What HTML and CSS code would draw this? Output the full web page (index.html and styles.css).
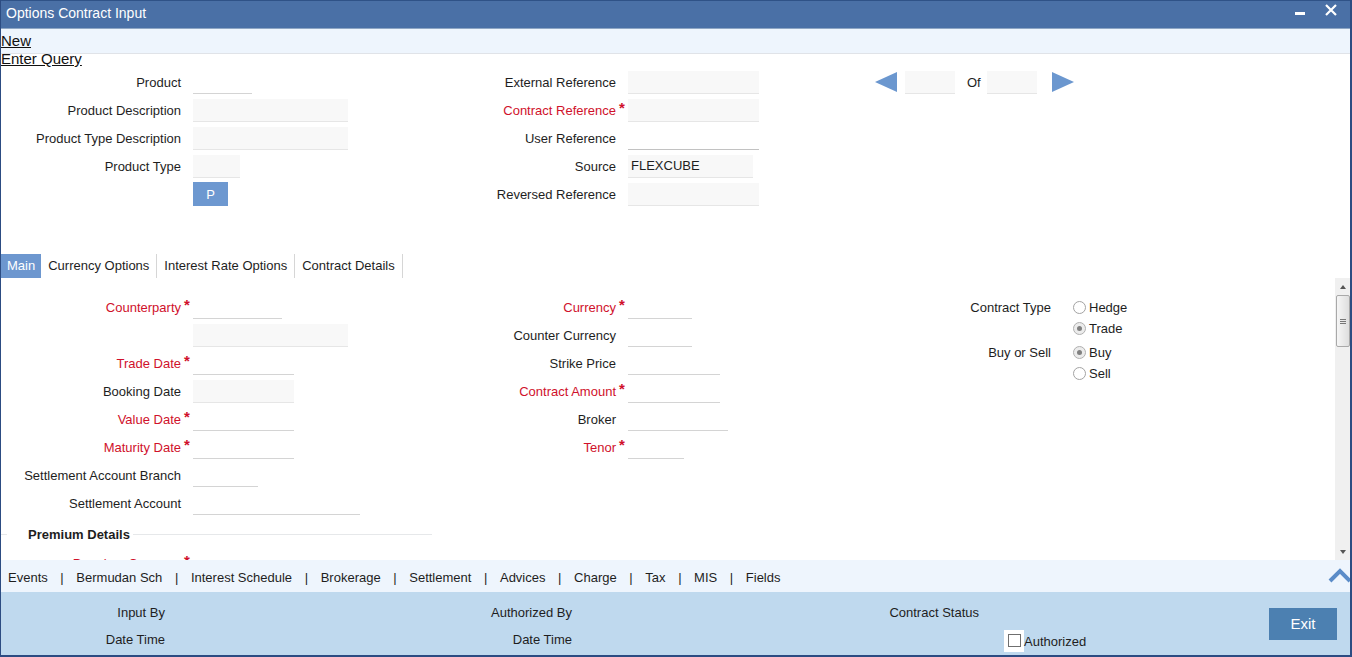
FILE: index.html
```html
<!DOCTYPE html>
<html>
<head>
<meta charset="utf-8">
<title>Options Contract Input</title>
<link rel="stylesheet" href="styles.css">
</head>
<body>
<div class="window">
  <div class="titlebar">
    <span class="title">Options Contract Input</span>
    <svg class="win-min" width="10" height="12" viewBox="0 0 10 12"><rect x="0" y="8" width="10" height="3" fill="#fff"/></svg>
    <svg class="win-close" width="12" height="12" viewBox="0 0 12 12"><path d="M1 1 L11 11 M11 1 L1 11" stroke="#fff" stroke-width="2.2" fill="none"/></svg>
  </div>
  <div class="menubar"><a class="menu-link">New</a></div>
  <div class="menurow2"><a class="menu-link">Enter Query</a></div>

  <div class="header">
    <div class="col col-left">
      <div class="frow"><span class="lbl">Product</span><span class="star"></span><input class="fld ed w59" type="text"></div>
      <div class="frow"><span class="lbl">Product Description</span><span class="star"></span><input class="fld ro w155" type="text" readonly></div>
      <div class="frow"><span class="lbl">Product Type Description</span><span class="star"></span><input class="fld ro w155" type="text" readonly></div>
      <div class="frow"><span class="lbl">Product Type</span><span class="star"></span><input class="fld ro w47" type="text" readonly></div>
      <div class="frow"><span class="lbl"></span><span class="star"></span><button class="pbtn">P</button></div>
    </div>
    <div class="col col-mid hdr-mid">
      <div class="frow"><span class="lbl">External Reference</span><span class="star"></span><input class="fld ro w131" type="text" readonly></div>
      <div class="frow"><span class="lbl req">Contract Reference</span><span class="star">*</span><input class="fld ro w131" type="text" readonly></div>
      <div class="frow"><span class="lbl">User Reference</span><span class="star"></span><input class="fld ed dark w131" type="text"></div>
      <div class="frow"><span class="lbl">Source</span><span class="star"></span><input class="fld ro w125" type="text" value="FLEXCUBE" readonly></div>
      <div class="frow"><span class="lbl">Reversed Reference</span><span class="star"></span><input class="fld ro w131" type="text" readonly></div>
    </div>
    <div class="nav">
      <svg width="22" height="20" viewBox="0 0 22 20"><polygon points="0,10 22,0 22,20" fill="#6b97cf"/></svg>
      <input class="fld ro navbox" type="text" readonly>
      <span class="of">Of</span>
      <input class="fld ro navbox" type="text" readonly>
      <svg class="nav-next" width="22" height="20" viewBox="0 0 22 20"><polygon points="0,0 22,10 0,20" fill="#6b97cf"/></svg>
    </div>
  </div>

  <div class="tabs">
    <span class="tab tab-active">Main</span>
    <span class="tab">Currency Options</span>
    <span class="tab">Interest Rate Options</span>
    <span class="tab">Contract Details</span>
  </div>

  <div class="content">
    <div class="content-inner">
      <div class="main-cols">
        <div class="col col-left">
          <div class="frow"><span class="lbl req">Counterparty</span><span class="star">*</span><input class="fld ed w89" type="text"></div>
          <div class="frow"><span class="lbl"></span><span class="star"></span><input class="fld ro w155" type="text" readonly></div>
          <div class="frow"><span class="lbl req">Trade Date</span><span class="star">*</span><input class="fld ed w101" type="text"></div>
          <div class="frow"><span class="lbl">Booking Date</span><span class="star"></span><input class="fld ro w101" type="text" readonly></div>
          <div class="frow"><span class="lbl req">Value Date</span><span class="star">*</span><input class="fld ed w101" type="text"></div>
          <div class="frow"><span class="lbl req">Maturity Date</span><span class="star">*</span><input class="fld ed w101" type="text"></div>
          <div class="frow"><span class="lbl">Settlement Account Branch</span><span class="star"></span><input class="fld ed w65" type="text"></div>
          <div class="frow"><span class="lbl">Settlement Account</span><span class="star"></span><input class="fld ed w167" type="text"></div>
        </div>
        <div class="col col-mid">
          <div class="frow"><span class="lbl req">Currency</span><span class="star">*</span><input class="fld ed w64" type="text"></div>
          <div class="frow"><span class="lbl">Counter Currency</span><span class="star"></span><input class="fld ed w64" type="text"></div>
          <div class="frow"><span class="lbl">Strike Price</span><span class="star"></span><input class="fld ed w92" type="text"></div>
          <div class="frow"><span class="lbl req">Contract Amount</span><span class="star">*</span><input class="fld ed w92" type="text"></div>
          <div class="frow"><span class="lbl">Broker</span><span class="star"></span><input class="fld ed w100" type="text"></div>
          <div class="frow"><span class="lbl req">Tenor</span><span class="star">*</span><input class="fld ed w56" type="text"></div>
        </div>
        <div class="col col-right">
          <div class="rgroup">
            <span class="rlbl">Contract Type</span>
            <div class="ropts">
              <div class="ropt"><span class="radio"></span>Hedge</div>
              <div class="ropt"><span class="radio checked"></span>Trade</div>
            </div>
          </div>
          <div class="rgroup">
            <span class="rlbl">Buy or Sell</span>
            <div class="ropts">
              <div class="ropt"><span class="radio checked"></span>Buy</div>
              <div class="ropt"><span class="radio"></span>Sell</div>
            </div>
          </div>
        </div>
      </div>
      <div class="section-title"><span class="sec-text">Premium Details</span></div>
      <div class="col col-left">
        <div class="frow"><span class="lbl req">Premium Currency</span><span class="star">*</span><input class="fld ed w64" type="text"></div>
      </div>
    </div>
    <div class="scrollbar">
      <div class="sb-btn"><span class="tri-up"></span></div>
      <div class="sb-thumb"><span class="grip"></span><span class="grip"></span><span class="grip"></span></div>
      <div class="sb-track"></div>
      <div class="sb-btn"><span class="tri-down"></span></div>
    </div>
  </div>

  <div class="toolbar">
    <span class="tb-item">Events</span><span class="sep">|</span>
    <span class="tb-item">Bermudan Sch</span><span class="sep">|</span>
    <span class="tb-item">Interest Schedule</span><span class="sep">|</span>
    <span class="tb-item">Brokerage</span><span class="sep">|</span>
    <span class="tb-item">Settlement</span><span class="sep">|</span>
    <span class="tb-item">Advices</span><span class="sep">|</span>
    <span class="tb-item">Charge</span><span class="sep">|</span>
    <span class="tb-item">Tax</span><span class="sep">|</span>
    <span class="tb-item">MIS</span><span class="sep">|</span>
    <span class="tb-item">Fields</span>
    <svg class="chev" width="24" height="16" viewBox="0 0 24 16"><polyline points="2,14 12,4 22,14" fill="none" stroke="#5b8cc8" stroke-width="4"/></svg>
  </div>

  <div class="footer">
    <div class="fblock">
      <div class="fr"><span class="flbl">Input By</span></div>
      <div class="fr"><span class="flbl">Date Time</span></div>
    </div>
    <div class="fblock">
      <div class="fr"><span class="flbl">Authorized By</span></div>
      <div class="fr"><span class="flbl">Date Time</span></div>
    </div>
    <div class="fblock">
      <div class="fr"><span class="flbl">Contract Status</span></div>
      <div class="fr"><span class="flbl"></span><span class="cbwrap"><span class="cb"></span></span><span class="cbtext">Authorized</span></div>
    </div>
    <button class="exit">Exit</button>
  </div>
</div>
</body>
</html>
```

FILE: styles.css
```css
* { box-sizing: border-box; }
html, body { margin: 0; padding: 0; }
body {
  font-family: "Liberation Sans", Arial, sans-serif;
  font-size: 13px;
  color: #1e1e1e;
  background: #fff;
}
.window {
  width: 1352px;
  height: 657px;
  display: flex;
  flex-direction: column;
  border-left: 1px solid #2c4c82;
  border-right: 2px solid #2c4c82;
  border-bottom: 2px solid #2c4c82;
  overflow: hidden;
}
.titlebar {
  height: 29px;
  flex: none;
  display: flex;
  align-items: flex-start;
  background: #4a70a6;
  border-top: 1px solid #2f5287;
  border-bottom: 1px solid #8ea6c4;
  padding: 5px 13px 0 5px;
  color: #fff;
  font-size: 14px;
  line-height: 14px;
}
.title { flex: 1; }
.win-min { margin-top: -2px; margin-right: 20px; }
.win-close { margin-top: -2px; }

.menubar {
  height: 25px;
  flex: none;
  background: #eef5fd;
  border-bottom: 1px solid #e0e3e8;
  line-height: 23px;
}
.menurow2 {
  height: 14px;
  flex: none;
  line-height: 10px;
}
.menu-link {
  font-size: 15px;
  color: #111;
  text-decoration: underline;
}

.header {
  height: 140px;
  flex: none;
  margin-bottom: 46px;
  display: flex;
}
.col { display: flex; flex-direction: column; }
.col-left { width: 434px; }
.col-left .lbl { width: 180px; }
.col-mid { width: 435px; }
.col-mid .lbl { width: 181px; }
.hdr-mid { width: 440px; }
.frow {
  height: 28px;
  display: flex;
  align-items: center;
  flex: none;
}
.lbl { text-align: right; white-space: nowrap; flex: none; }
.req { color: #d0112b; }
.star {
  width: 12px;
  flex: none;
  align-self: flex-start;
  margin-top: 5px;
  padding-left: 3px;
  color: #d0112b;
  font-size: 15px;
  font-weight: bold;
  line-height: 14px;
}
.fld {
  height: 23px;
  border: none;
  border-bottom: 1px solid #e6e6e6;
  padding: 0 3px;
  margin: 0;
  font-family: "Liberation Sans", Arial, sans-serif;
  font-size: 13px;
  color: #1e1e1e;
  outline: none;
  flex: none;
}
.ro { background: #f8f8f8; }
.ed { background: #fff; border-bottom-color: #d4d4d4; }
.dark { border-bottom-color: #c2c2c2; }
.w47 { width: 47px; }
.w56 { width: 56px; }
.w59 { width: 59px; }
.w64 { width: 64px; }
.w65 { width: 65px; }
.w89 { width: 89px; }
.w92 { width: 92px; }
.w100 { width: 100px; }
.w101 { width: 101px; }
.w125 { width: 125px; }
.w131 { width: 131px; }
.w155 { width: 155px; }
.w167 { width: 167px; }
.pbtn {
  width: 35px;
  height: 24px;
  border: none;
  background: #6d98d0;
  color: #fff;
  font-family: "Liberation Sans", Arial, sans-serif;
  font-size: 13px;
  padding: 0;
}
.nav {
  height: 28px;
  display: flex;
  align-items: center;
}
.navbox { width: 50px; margin-left: 8px; }
.of { margin-left: 12px; margin-right: 6px; }
.nav .of + .navbox { margin-left: 0; }
.nav-next { margin-left: 15px; }

.tabs {
  height: 24px;
  flex: none;
  display: flex;
  line-height: 24px;
}
.tab {
  padding: 0 7px;
  border-right: 1px solid #d6d6d6;
  white-space: nowrap;
}
.tab-active {
  padding: 0 6px;
  background: #6d97cf;
  color: #fff;
  border-right: none;
}

.content {
  flex: 1;
  display: flex;
  min-height: 0;
  overflow: hidden;
}
.content-inner {
  flex: 1;
  overflow: hidden;
  padding-top: 15px;
}
.main-cols { display: flex; }
.col-right { padding-top: 4px; }
.rgroup { display: flex; margin-bottom: 3px; }
.rlbl {
  width: 181px;
  text-align: right;
  height: 21px;
  line-height: 21px;
  margin-right: 22px;
}
.ropts { display: flex; flex-direction: column; }
.ropt {
  height: 21px;
  display: flex;
  align-items: center;
  gap: 3px;
}
.radio {
  width: 13px;
  height: 13px;
  border-radius: 50%;
  border: 1px solid #a3a3a3;
  background: #fff;
  display: inline-flex;
  align-items: center;
  justify-content: center;
}
.radio.checked { background: #ececec; border-color: #b0b0b0; }
.radio.checked::after {
  content: "";
  width: 5px;
  height: 5px;
  border-radius: 50%;
  background: #808080;
}
.section-title {
  width: 432px;
  height: 30px;
  margin-top: 2px;
  margin-left: -1px;
  display: flex;
  align-items: center;
}
.section-title::before {
  content: "";
  width: 7px;
  height: 1px;
  background: #e6e8ea;
  margin-right: 21px;
}
.section-title::after {
  content: "";
  flex: 1;
  height: 1px;
  background: #e6e8ea;
  margin-left: 3px;
}
.sec-text { font-weight: bold; }

.scrollbar {
  width: 15px;
  flex: none;
  background: #f0f0f0;
  display: flex;
  flex-direction: column;
  align-items: center;
}
.sb-btn {
  height: 17px;
  width: 15px;
  display: flex;
  align-items: center;
  justify-content: center;
  flex: none;
}
.tri-up, .tri-down {
  width: 0; height: 0;
  border-left: 3.5px solid transparent;
  border-right: 3.5px solid transparent;
}
.tri-up { border-bottom: 4px solid #555; }
.tri-down { border-top: 4px solid #555; }
.sb-thumb {
  width: 14px;
  height: 52px;
  flex: none;
  border: 1px solid #a9a9a9;
  border-radius: 2px;
  background: linear-gradient(to right, #f6f6f6, #dedede);
  display: flex;
  flex-direction: column;
  align-items: center;
  justify-content: center;
  gap: 1px;
}
.grip { width: 6px; height: 1px; background: #777; }
.sb-track { flex: 1; }

.toolbar {
  height: 32px;
  flex: none;
  background: #eef5fd;
  display: flex;
  align-items: center;
  padding-left: 7px;
  padding-top: 2px;
  white-space: nowrap;
}
.sep { margin: 0 12.6px; }
.chev { margin-left: auto; margin-right: -2px; margin-top: -4px; }

.footer {
  height: 63px;
  flex: none;
  background: #bfd9ee;
  display: flex;
  align-items: flex-start;
  padding-top: 7px;
}
.fblock { width: 407px; display: flex; flex-direction: column; flex: none; }
.fr { height: 27px; display: flex; align-items: center; }
.flbl { width: 164px; text-align: right; flex: none; }
.cbwrap {
  width: 20px;
  height: 22px;
  margin-left: 25px;
  margin-top: 2px;
  background: #fff;
  display: flex;
  align-items: center;
  justify-content: center;
}
.cb {
  width: 13px;
  height: 13px;
  border: 1px solid #6f6f6f;
  background: #fff;
}
.cbtext { margin-top: 3px; }
.exit {
  width: 68px;
  height: 32px;
  margin-left: 47px;
  margin-top: 9px;
  border: none;
  background: #4c80b1;
  color: #fff;
  font-family: "Liberation Sans", Arial, sans-serif;
  font-size: 15px;
  padding: 0 0 2px 0;
}
```
